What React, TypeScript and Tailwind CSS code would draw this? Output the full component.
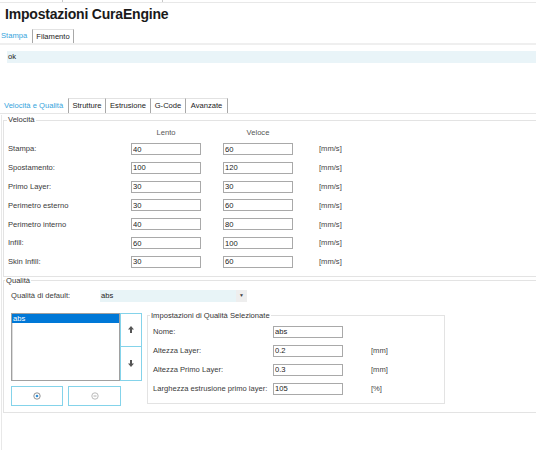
import React from "react";

const speedRows: [string, string, string][] = [
  ["Stampa:", "40", "60"],
  ["Spostamento:", "100", "120"],
  ["Primo Layer:", "30", "30"],
  ["Perimetro esterno", "30", "60"],
  ["Perimetro interno", "40", "80"],
  ["Infill:", "60", "100"],
  ["Skin Infill:", "30", "60"],
];

const qualRows: [string, string, string][] = [
  ["Nome:", "abs", ""],
  ["Altezza Layer:", "0.2", "[mm]"],
  ["Altezza Primo Layer:", "0.3", "[mm]"],
  ["Larghezza estrusione primo layer:", "105", "[%]"],
];

function Field({ value }: { value: string }) {
  return (
    <input
      readOnly
      value={value}
      className="w-[70px] h-[12px] border border-[#a9a9a9] bg-white pl-[1px] text-[7.6px] leading-[10px] text-[#222] outline-none"
    />
  );
}

function Arrow({ down }: { down?: boolean }) {
  return (
    <svg width="6" height="7" viewBox="0 0 6 7" className={down ? "rotate-180" : ""}>
      <path d="M3 0 L6 3.5 H4 V7 H2 V3.5 H0 Z" fill="#555" />
    </svg>
  );
}

export default function App() {
  return (
    <div className="w-[536px] h-[450px] overflow-hidden bg-white font-['Liberation_Sans',Arial,sans-serif] text-[7.6px] text-[#3a3a3a]">
      {/* top strip */}
      <div className="flex h-[3px] border-b border-[#e8e8e8]">
        <div className="w-[63px] border-r border-[#c8c8c8]" />
        <div className="w-[100px] border-r border-[#c8c8c8]" />
      </div>
      {/* title */}
      <div className="h-[22px] pl-[5px] text-[14px] font-bold leading-[22px] text-[#1a1a1a] tracking-[-0.2px]">
        Impostazioni CuraEngine
      </div>
      {/* tabs row 1 */}
      <div className="mt-[4px] flex h-[16px] border-b-2 border-[#efefef]">
        <div className="w-[31px] pl-[1px] leading-[13px] text-[#36a4dc]">Stampa</div>
        <div className="ml-[1px] w-[42px] border-x border-t border-x-[#a8a8a8] border-t-[#e2e2e2] text-center leading-[13px] text-[#222]">
          Filamento
        </div>
      </div>
      {/* ok bar */}
      <div className="ml-[7px] mt-[6px] h-[12px] bg-[#e9f4f8] pl-[1px] leading-[12px] text-[#222]">ok</div>
      {/* tabs row 2 */}
      <div className="mt-[35px] flex h-[16px] border-b border-[#e6e6e6]">
        <div className="w-[68px] pl-[4px] leading-[15px] text-[#36a4dc]">Velocità e Qualità</div>
        <div className="w-[38px] border-x border-t border-x-[#a8a8a8] border-t-[#e2e2e2] text-center leading-[14px] text-[#222]">Strutture</div>
        <div className="w-[45px] border-r border-t border-r-[#a8a8a8] border-t-[#e2e2e2] text-center leading-[14px] text-[#222]">Estrusione</div>
        <div className="w-[35px] border-r border-t border-r-[#a8a8a8] border-t-[#e2e2e2] text-center leading-[14px] text-[#222]">G-Code</div>
        <div className="w-[42px] border-r border-t border-r-[#a8a8a8] border-t-[#e2e2e2] text-center leading-[14px] text-[#222]">Avanzate</div>
      </div>
      {/* panel */}
      <div className="ml-[1px] h-[400px] border-l border-[#e8e8e8]">
        {/* Velocità */}
        <fieldset className="ml-[1px] mt-[1px] w-[540px] border border-[#e3e3e3] p-0">
          <legend className="ml-[3px] px-[1px] leading-[10px] text-[#333]">Velocità</legend>
          <div className="pl-[4px] pb-[8px]">
            <div className="mt-[3px] flex h-[10px] leading-[10px] text-[#555]">
              <div className="w-[123px]" />
              <div className="w-[70px] text-center">Lento</div>
              <div className="ml-[22px] w-[70px] text-center">Veloce</div>
            </div>
            <div className="mt-[5px] flex flex-col gap-[6.83px]">
              {speedRows.map(([l, a, b]) => (
                <div key={l} className="flex h-[12px] items-center">
                  <div className="w-[123px]">{l}</div>
                  <Field value={a} />
                  <div className="ml-[22px]">
                    <Field value={b} />
                  </div>
                  <div className="ml-[26px] text-[#444]">[mm/s]</div>
                </div>
              ))}
            </div>
          </div>
        </fieldset>
        {/* Qualità */}
        <fieldset className="ml-[1px] -mt-[1px] w-[540px] border border-[#e3e3e3] p-0">
          <legend className="ml-[1px] px-[1px] leading-[10px] text-[#333]">Qualità</legend>
          <div className="pl-[7px] pb-[6px]">
            <div className="mt-[4px] flex h-[12px] items-center">
              <div className="w-[89px]">Qualità di default:</div>
              <div className="flex h-[12px] w-[147px] bg-[#e8f4f7]">
                <div className="flex-1 pl-[1px] leading-[12px] text-[#222]">abs</div>
                <div className="flex w-[11px] items-center justify-center bg-[#eeeeee] text-[5px] text-[#444]">▼</div>
              </div>
            </div>
            <div className="mt-[11px] flex items-start">
              <div className="w-[131px]">
                <div className="flex">
                  <div className="h-[68px] w-[109px] border border-[#a0a0a0] bg-white shadow-[inset_1px_1px_0_#dcdcdc]">
                    <div className="h-[9px] bg-[#0078d7] pl-[1px] leading-[9px] text-white">abs</div>
                  </div>
                  <div className="flex w-[22px] flex-col">
                    <div className="flex h-[34px] items-center justify-center border border-[#84d3ea]">
                      <Arrow />
                    </div>
                    <div className="flex h-[34px] items-center justify-center border border-t-0 border-[#84d3ea]">
                      <Arrow down />
                    </div>
                  </div>
                </div>
                <div className="mt-[5px] flex">
                  <div className="flex h-[20px] w-[52px] items-center justify-center border border-[#84d3ea]">
                    <svg width="8" height="8" viewBox="0 0 8 8">
                      <circle cx="4" cy="4" r="3.2" fill="none" stroke="#777" strokeWidth="0.8" />
                      <circle cx="4" cy="4" r="1.3" fill="#2f8fd8" />
                    </svg>
                  </div>
                  <div className="ml-[5px] flex h-[20px] w-[53px] items-center justify-center border border-[#84d3ea]">
                    <svg width="8" height="8" viewBox="0 0 8 8">
                      <circle cx="4" cy="4" r="3.2" fill="none" stroke="#aaa" strokeWidth="0.8" />
                      <path d="M2.5 4 H5.5" stroke="#999" strokeWidth="0.8" />
                    </svg>
                  </div>
                </div>
              </div>
              <fieldset className="ml-[5px] -mt-[2px] w-[298px] border border-[#e3e3e3] p-0">
                <legend className="ml-[2px] px-[1px] leading-[10px] text-[#333]">
                  Impostazioni di Qualità Selezionate
                </legend>
                <div className="flex flex-col gap-[7px] pl-[5px] pt-[5px] pb-[8px]">
                  {qualRows.map(([l, v, u]) => (
                    <div key={l} className="flex h-[12px] items-center">
                      <div className="w-[120px]">{l}</div>
                      <Field value={v} />
                      <div className="ml-[28px] text-[#444]">{u}</div>
                    </div>
                  ))}
                </div>
              </fieldset>
            </div>
          </div>
        </fieldset>
      </div>
    </div>
  );
}
